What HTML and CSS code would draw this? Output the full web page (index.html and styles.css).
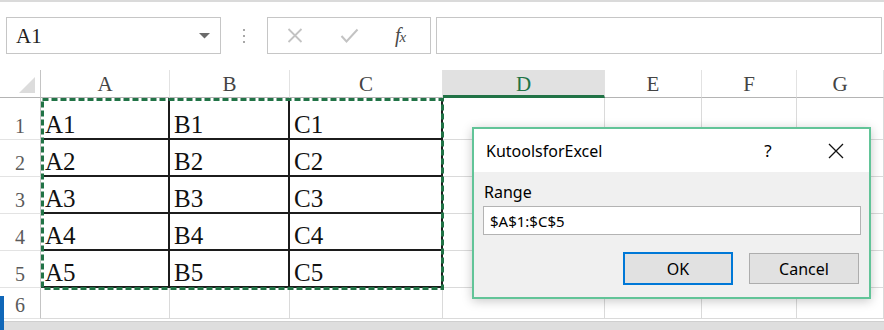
FILE: index.html
```html
<!DOCTYPE html>
<html lang="en">
<head>
  <meta charset="UTF-8" />
  <title>Kutools for Excel - Range</title>
  <link rel="stylesheet" href="styles.css">
</head>
<body>
  <div class="app">
    <div class="toolbar">
      <div class="namebox">
        <span>A1</span>
        <svg class="drop" width="11" height="6" viewBox="0 0 11 6"><polygon points="0,0 11,0 5.5,5.5" fill="#6b6b6b"/></svg>
      </div>
      <div class="grip"><i></i><i></i><i></i></div>
      <div class="fx-buttons">
        <svg class="btn-cancel" width="16" height="15" viewBox="0 0 16 15"><path d="M1.5 1 L14.5 14 M14.5 1 L1.5 14" stroke="#c3c3c3" stroke-width="1.8" fill="none"/></svg>
        <svg class="btn-enter" width="19" height="15" viewBox="0 0 19 15"><path d="M1.5 8 L6.5 13.5 L17.5 1.5" stroke="#c3c3c3" stroke-width="2" fill="none"/></svg>
        <span class="fx">f<span>x</span></span>
      </div>
      <div class="formula"></div>
    </div>

    <div class="sheet">
      <div class="grid">
        <div class="cell corner"><svg width="40" height="27" viewBox="0 0 40 27"><polygon points="35,7 35,23 19,23" fill="#dcdcdc"/></svg></div>
        <div class="cell ch">A</div>
        <div class="cell ch">B</div>
        <div class="cell ch">C</div>
        <div class="cell ch active">D</div>
        <div class="cell ch">E</div>
        <div class="cell ch">F</div>
        <div class="cell ch">G</div>

        <div class="cell rh">1</div>
        <div class="cell t">A1</div>
        <div class="cell t">B1</div>
        <div class="cell t">C1</div>
        <div class="cell"></div>
        <div class="cell"></div>
        <div class="cell"></div>
        <div class="cell"></div>

        <div class="cell rh">2</div>
        <div class="cell t">A2</div>
        <div class="cell t">B2</div>
        <div class="cell t">C2</div>
        <div class="cell"></div>
        <div class="cell"></div>
        <div class="cell"></div>
        <div class="cell"></div>

        <div class="cell rh">3</div>
        <div class="cell t">A3</div>
        <div class="cell t">B3</div>
        <div class="cell t">C3</div>
        <div class="cell"></div>
        <div class="cell"></div>
        <div class="cell"></div>
        <div class="cell"></div>

        <div class="cell rh">4</div>
        <div class="cell t">A4</div>
        <div class="cell t">B4</div>
        <div class="cell t">C4</div>
        <div class="cell"></div>
        <div class="cell"></div>
        <div class="cell"></div>
        <div class="cell"></div>

        <div class="cell rh">5</div>
        <div class="cell t">A5</div>
        <div class="cell t">B5</div>
        <div class="cell t">C5</div>
        <div class="cell"></div>
        <div class="cell"></div>
        <div class="cell"></div>
        <div class="cell"></div>

        <div class="cell rh">6</div>
        <div class="cell"></div>
        <div class="cell"></div>
        <div class="cell"></div>
        <div class="cell"></div>
        <div class="cell"></div>
        <div class="cell"></div>
        <div class="cell"></div>
      </div>

      <!-- copy marquee around A1:C5 -->
      <svg class="marquee" width="403" height="192" viewBox="0 0 403 192">
        <rect x="1.5" y="1.5" width="400" height="189" fill="none" stroke="#217346" stroke-width="3" stroke-dasharray="6 3"/>
      </svg>

      <div class="dialog">
        <div class="dialog-title">
          <span class="title-text">KutoolsforExcel</span>
          <span class="title-help">?</span>
          <span class="title-close">
            <svg width="16" height="16" viewBox="0 0 16 16"><path d="M1 1 L15 15 M15 1 L1 15" stroke="#111" stroke-width="1.3" fill="none"/></svg>
          </span>
        </div>
        <div class="dialog-body">
          <div class="field-label">Range</div>
          <div class="field-input">$A$1:$C$5</div>
          <div class="dialog-buttons">
            <button class="dlg-btn default">OK</button>
            <button class="dlg-btn">Cancel</button>
          </div>
        </div>
      </div>
    </div>

    <div class="footer"></div>
    <div class="tab-marker"></div>
  </div>
</body>
</html>
```

FILE: styles.css
```css
body {
  margin: 0;
  background: #ffffff;
  overflow: hidden;
}
.app {
  position: relative;
  width: 884px;
  height: 330px;
  overflow: hidden;
  font-family: "Liberation Serif", "Times New Roman", serif;
}

/* formula bar */
.toolbar {
  height: 70px;
  box-sizing: border-box;
  border-top: 2px solid #dadada;
  padding: 15px 2px 0 6px;
  display: flex;
  align-items: flex-start;
}
.namebox {
  width: 215px;
  height: 37px;
  box-sizing: border-box;
  border: 1px solid #c6c6c6;
  display: flex;
  align-items: center;
  justify-content: space-between;
  padding: 0 10px 0 9px;
  font-size: 21px;
  color: #222;
}
.namebox span {
  padding-top: 1px;
}
.grip {
  width: 46px;
  height: 37px;
  display: flex;
  flex-direction: column;
  align-items: center;
  justify-content: center;
  gap: 4px;
}
.grip i {
  display: block;
  width: 2px;
  height: 2px;
  background: #a8a8a8;
}
.fx-buttons {
  width: 164px;
  height: 37px;
  box-sizing: border-box;
  border: 1px solid #c6c6c6;
  display: flex;
  align-items: center;
  padding-left: 19px;
}
.btn-enter {
  margin-left: 37px;
}
.fx {
  margin-left: 36px;
  font-style: italic;
  font-size: 20px;
  color: #4a4a4a;
  letter-spacing: -1px;
}
.fx span {
  font-size: 15px;
}
.formula {
  flex: 1;
  height: 37px;
  box-sizing: border-box;
  border: 1px solid #c6c6c6;
  margin-left: 5px;
}

/* worksheet */
.sheet {
  position: relative;
}
.grid {
  display: grid;
  grid-template-columns: 41px 129px 120px 153px 162px 97px 95px 87px;
  grid-template-rows: 28px 42px 37px 37px 37px 37px 31px;
}
.cell {
  box-sizing: border-box;
  border-right: 1px solid #dadada;
  border-bottom: 1px solid #dadada;
  display: flex;
  align-items: flex-end;
  padding: 0 0 1px 4px;
  font-size: 25px;
  line-height: 1;
  color: #111;
}
.cell.t {
  border-right: 2px solid #1c1c1c;
  border-bottom: 2px solid #1c1c1c;
}
.corner {
  padding: 0;
  border-right: 1px solid #c4c4c4;
  border-bottom: 1px solid #b4b4b4;
  align-items: flex-start;
}
.ch {
  justify-content: center;
  padding: 0 0 2px 0;
  border-right: 1px solid #e2e2e2;
  border-bottom: 1px solid #b4b4b4;
  font-size: 21px;
  color: #444;
}
.ch.active {
  background: #e1e1e1;
  color: #217346;
  border-bottom: 3px solid #217346;
  padding-bottom: 0;
}
.rh {
  justify-content: center;
  padding: 0 0 3px 0;
  border-right: 1px solid #c4c4c4;
  border-bottom: 1px solid #e3e3e3;
  font-size: 20px;
  color: #5a5a5a;
}
.marquee {
  position: absolute;
  left: 41px;
  top: 28px;
}

/* Kutools dialog */
.dialog {
  position: absolute;
  left: 472px;
  top: 57px;
  width: 399px;
  height: 172px;
  box-sizing: border-box;
  border: 2px solid #62c498;
  background: #f0f0f0;
  box-shadow: 0 2px 10px rgba(0, 0, 0, 0.22);
  font-family: "Noto Sans", "Open Sans", sans-serif;
  color: #000;
}
.dialog-title {
  height: 43px;
  background: #ffffff;
  display: flex;
  align-items: center;
  padding: 0 10px 0 12px;
}
.title-text {
  flex: 1;
  font-size: 16px;
}
.title-help {
  width: 46px;
  text-align: center;
  font-size: 17px;
  margin-right: 22px;
}
.title-close {
  width: 46px;
  display: flex;
  justify-content: center;
}
.title-close svg {
  display: block;
}
.dialog-body {
  padding: 9px 8px 0 9px;
}
.field-label {
  font-size: 16px;
  line-height: 22px;
  margin-left: 1px;
}
.field-input {
  margin-top: 3px;
  height: 29px;
  box-sizing: border-box;
  border: 1px solid #b3b3b3;
  background: #ffffff;
  padding: 0 6px;
  display: flex;
  align-items: center;
  font-size: 15px;
}
.dialog-buttons {
  margin-top: 17px;
  display: flex;
  justify-content: flex-end;
  align-items: center;
  gap: 16px;
  padding-right: 2px;
}
.dlg-btn {
  width: 110px;
  height: 31px;
  box-sizing: border-box;
  border: 1px solid #adadad;
  background: #e1e1e1;
  font-family: inherit;
  font-size: 16px;
  color: #000;
  padding: 0;
}
.dlg-btn.default {
  height: 33px;
  border: 2px solid #0078d7;
}

.footer {
  margin-top: 2px;
  height: 9px;
  background: #dedede;
  border-top: 1px solid #cfcfcf;
}
.tab-marker {
  position: absolute;
  left: 0;
  top: 296px;
  width: 4px;
  height: 34px;
  background: #1067b8;
}
```
